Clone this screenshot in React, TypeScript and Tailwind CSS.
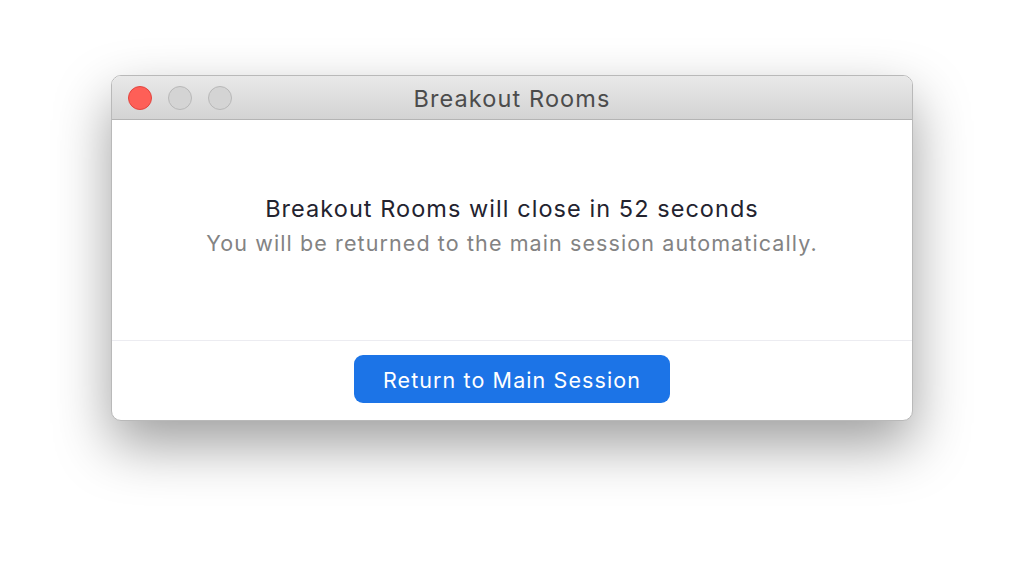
export default function App() {
  return (
    <div
      className="w-[1024px] h-[568px] bg-white flex justify-center pt-[75px]"
      style={{ fontFamily: "Inter, 'Noto Sans', sans-serif" }}
    >
      <div className="w-[802px] h-[346px] flex flex-col rounded-[10px] bg-white overflow-hidden border border-[#b9b9b9] shadow-[0_24px_55px_rgba(0,0,0,0.38)]">
        {/* Title bar */}
        <div className="relative h-[44px] flex items-center justify-center bg-gradient-to-b from-[#e9e9e9] to-[#d3d3d3] border-b border-[#b4b4b4]">
          <div className="absolute left-[16px] top-[10px] flex gap-[16px]">
            <div className="w-[24px] h-[24px] rounded-full bg-[#fe5f57] border border-[#e2453f]" />
            <div className="w-[24px] h-[24px] rounded-full bg-[#d4d4d4] border border-[#b8b8b8]" />
            <div className="w-[24px] h-[24px] rounded-full bg-[#d4d4d4] border border-[#b8b8b8]" />
          </div>
          <span className="text-[23.5px] tracking-[1.1px] text-[#4c4c4c] pt-[3px]">Breakout Rooms</span>
        </div>

        {/* Body */}
        <div className="h-[221px] flex flex-col items-center pt-[74px] border-b border-[#ececf1]">
          <div className="text-[23.5px] leading-[30px] tracking-[1.05px] text-[#23232f]">
            Breakout Rooms will close in 52 seconds
          </div>
          <div className="text-[21.5px] leading-[28px] tracking-[1.1px] text-[#838383] mt-[5px]">
            You will be returned to the main session automatically.
          </div>
        </div>

        {/* Footer */}
        <div className="flex-1 flex justify-center pt-[14px]">
          <button className="w-[316px] h-[48px] rounded-[9px] bg-[#1c74e7] text-white text-[21.5px] tracking-[1.1px] pt-[2px]">
            Return to Main Session
          </button>
        </div>
      </div>
    </div>
  );
}
